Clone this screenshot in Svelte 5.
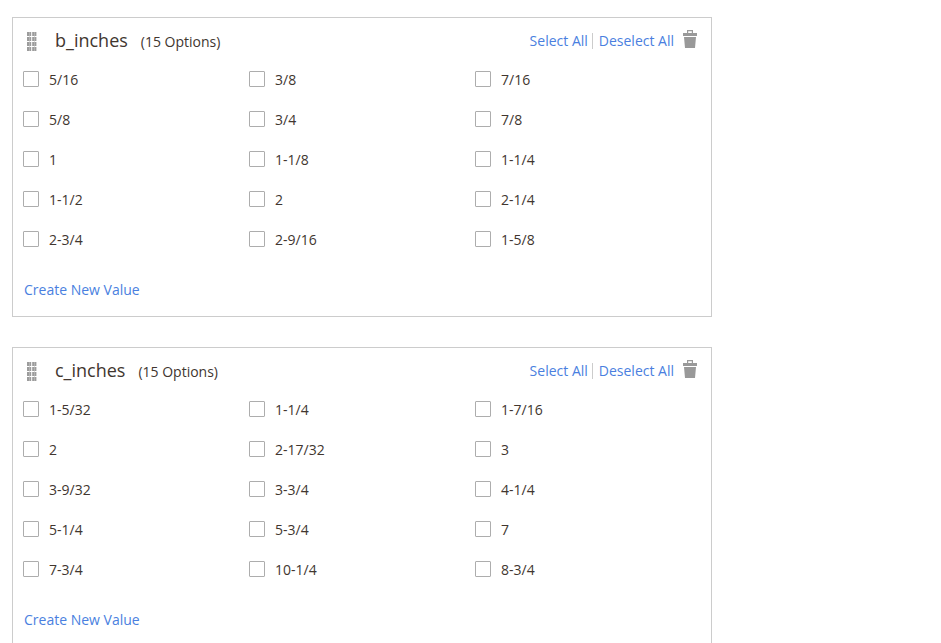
<script>
  const attributes = [
    {
      name: 'b_inches',
      values: ['5/16', '3/8', '7/16', '5/8', '3/4', '7/8', '1', '1-1/8', '1-1/4', '1-1/2', '2', '2-1/4', '2-3/4', '2-9/16', '1-5/8']
    },
    {
      name: 'c_inches',
      values: ['1-5/32', '1-1/4', '1-7/16', '2', '2-17/32', '3', '3-9/32', '3-3/4', '4-1/4', '5-1/4', '5-3/4', '7', '7-3/4', '10-1/4', '8-3/4']
    }
  ];
</script>

<div class="page">
  {#each attributes as attr}
    <section class="card">
      <header class="head">
        <svg class="grip" width="10" height="19" viewBox="0 0 10 19" aria-hidden="true">
          <path fill="#9c9c9c" d="M0 0h4.2v4H0zM5.2 0h4.2v4H5.2zM0 5h4.2v4H0zM5.2 5h4.2v4H5.2zM0 10h4.2v4H0zM5.2 10h4.2v4H5.2zM0 15h4.2v4H0zM5.2 15h4.2v4H5.2z"/>
          <path fill="#c4c4c4" d="M2 0h.6v19H2zM7.2 0h.6v19h-.6z"/>
        </svg>
        <span class="name">{attr.name}</span>
        <span class="count">({attr.values.length} Options)</span>
        <div class="actions">
          <a class="link sel">Select All</a>
          <a class="link desel">Deselect All</a>
          <svg class="trash" width="14" height="18" viewBox="0 0 14 18" aria-hidden="true">
            <path fill="#999" fill-rule="evenodd" d="M4 0h6v3h4v3H0V3h4zM5.2 1.2V3h3.6V1.2zM1 7h12l-1 11H2z"/>
          </svg>
        </div>
      </header>
      <div class="grid">
        {#each attr.values as v}
          <label class="opt">
            <input type="checkbox" />
            <span>{v}</span>
          </label>
        {/each}
      </div>
      <a class="link create">Create New Value</a>
    </section>
  {/each}
</div>

<style>
  :global(body) {
    margin: 0;
    background: #fff;
    overflow: hidden;
  }
  .page {
    padding: 17px 0 0 12px;
    width: 700px;
    font-family: 'Open Sans', sans-serif;
    font-size: 14px;
    color: #41362f;
  }
  .card {
    box-sizing: border-box;
    width: 700px;
    height: 300px;
    border: 1px solid #ccc;
    margin-bottom: 30px;
    padding: 0 10px;
  }
  .head {
    display: flex;
    align-items: center;
    height: 41px;
    padding-top: 3px;
    margin-bottom: -3px;
  }
  .grip {
    margin-left: 4px;
    flex: none;
  }
  .name {
    margin-left: 18px;
    font-size: 18px;
    line-height: 24px;
    margin-top: -3px;
  }
  .count {
    margin-left: 13px;
    line-height: 20px;
    margin-top: 1px;
  }
  .actions {
    margin-left: auto;
    display: flex;
    align-items: center;
    padding-right: 1px;
    margin-top: -2px;
  }
  .link {
    color: #4a7fe0;
    line-height: 16px;
  }
  .sel {
    padding-right: 4px;
    border-right: 1px solid #ccc;
  }
  .desel {
    margin-left: 6px;
  }
  .trash {
    margin: -3px 3px 0 9px;
  }
  .grid {
    display: grid;
    grid-template-columns: repeat(3, 226px);
    grid-auto-rows: 40px;
  }
  .opt {
    display: flex;
    align-items: center;
    height: 40px;
  }
  .opt input {
    appearance: none;
    box-sizing: border-box;
    width: 16px;
    height: 16px;
    margin: 0 10px 0 0;
    border: 1px solid #adadad;
    border-radius: 1px;
    background: #fff;
  }
  .create {
    display: block;
    margin: 21px 0 0 1px;
    line-height: 20px;
  }
</style>
